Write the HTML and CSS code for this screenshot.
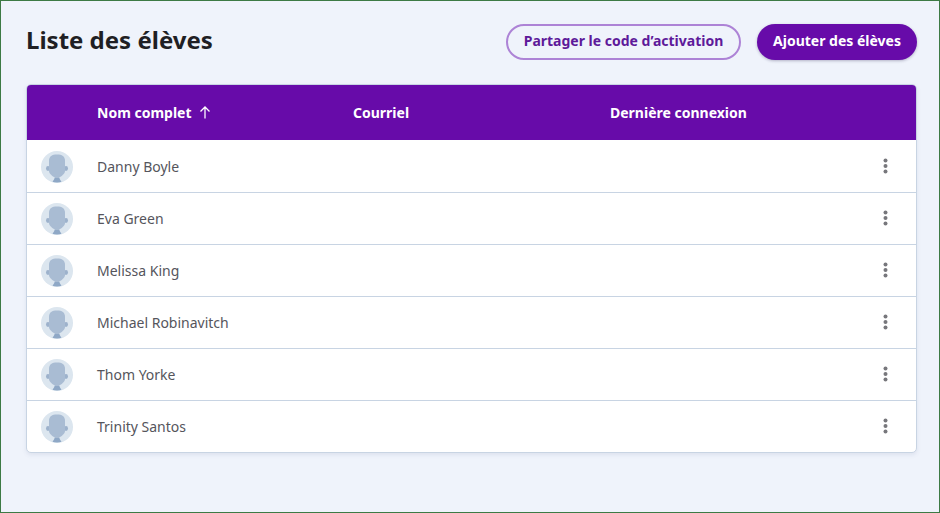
FILE: index.html
```html
<!DOCTYPE html>
<html lang="fr">
<head>
<meta charset="utf-8">
<title>Liste des élèves</title>
<link rel="stylesheet" href="styles.css">
</head>
<body>
<svg class="defs" width="0" height="0" aria-hidden="true">
  <symbol id="avatar" viewBox="0 0 32 32">
    <circle cx="16" cy="16" r="16" fill="#dce6ef"/>
    <ellipse cx="7" cy="17.500" rx="2" ry="2.400" fill="#9db2cc"/>
    <ellipse cx="25" cy="17.500" rx="2" ry="2.400" fill="#9db2cc"/>
    <path d="M8 10C8 5 11 3.500 16 3.500S24 5 24 10v10c0 2.500-3.500 5.500-6 6.500h-4c-2.500-1-6-4-6-6.500z" fill="#a9bcd3"/>
    <path d="M13.800 26.500h4.400l.8 2 1.500 2.300c-2.500.9-6.500.9-9 0l1.500-2.300z" fill="#8fa8c6"/>
  </symbol>
  <symbol id="dots" viewBox="0 0 5 16">
    <circle cx="2.500" cy="2.500" r="2"/>
    <circle cx="2.500" cy="8" r="2"/>
    <circle cx="2.500" cy="13.500" r="2"/>
  </symbol>
</svg>
<main class="page">
  <header class="top">
    <h1 class="title">Liste des élèves</h1>
    <div class="actions">
      <button class="btn btn-outline">Partager le code d’activation</button>
      <button class="btn btn-solid">Ajouter des élèves</button>
    </div>
  </header>
  <section class="card">
    <div class="row head">
      <div class="c-avatar"></div>
      <div class="c-name">Nom complet
        <svg class="arrow" width="12" height="13" viewBox="0 0 12 13"><path d="M6 12.500V1M1.500 5.500L6 1l4.500 4.500" fill="none" stroke="#fff" stroke-width="1.300"/></svg>
      </div>
      <div class="c-mail">Courriel</div>
      <div class="c-last">Dernière connexion</div>
    </div>
    <div class="row item">
      <div class="c-avatar"><svg class="avatar"><use href="#avatar"/></svg></div>
      <div class="c-name">Danny Boyle</div><div class="c-mail"></div><div class="c-last"></div>
      <svg class="dots"><use href="#dots"/></svg>
    </div>
    <div class="row item">
      <div class="c-avatar"><svg class="avatar"><use href="#avatar"/></svg></div>
      <div class="c-name">Eva Green</div><div class="c-mail"></div><div class="c-last"></div>
      <svg class="dots"><use href="#dots"/></svg>
    </div>
    <div class="row item">
      <div class="c-avatar"><svg class="avatar"><use href="#avatar"/></svg></div>
      <div class="c-name">Melissa King</div><div class="c-mail"></div><div class="c-last"></div>
      <svg class="dots"><use href="#dots"/></svg>
    </div>
    <div class="row item">
      <div class="c-avatar"><svg class="avatar"><use href="#avatar"/></svg></div>
      <div class="c-name">Michael Robinavitch</div><div class="c-mail"></div><div class="c-last"></div>
      <svg class="dots"><use href="#dots"/></svg>
    </div>
    <div class="row item">
      <div class="c-avatar"><svg class="avatar"><use href="#avatar"/></svg></div>
      <div class="c-name">Thom Yorke</div><div class="c-mail"></div><div class="c-last"></div>
      <svg class="dots"><use href="#dots"/></svg>
    </div>
    <div class="row item">
      <div class="c-avatar"><svg class="avatar"><use href="#avatar"/></svg></div>
      <div class="c-name">Trinity Santos</div><div class="c-mail"></div><div class="c-last"></div>
      <svg class="dots"><use href="#dots"/></svg>
    </div>
  </section>
</main>
</body>
</html>
```

FILE: styles.css
```css
* { box-sizing: border-box; }
html, body { margin: 0; height: 100%; }
body { font-family: "Noto Sans", sans-serif; overflow: hidden; }
.defs { display: block; height: 0; }
.page {
  width: 940px;
  height: 513px;
  background: #eff3fb;
  border: 1px solid #3d7a45;
  padding: 23px 22px 0 25px;
}
.top {
  display: flex;
  justify-content: space-between;
  align-items: center;
  height: 36px;
  margin-bottom: 24px;
}
.title {
  margin: 0 0 4px;
  font-size: 24px;
  line-height: 32px;
  font-weight: 700;
  color: #1f1f24;
}
.actions { display: flex; gap: 16px; }
.btn {
  font-family: inherit;
  font-size: 14px;
  font-weight: 700;
  line-height: 20px;
  height: 36px;
  border-radius: 18px;
  padding: 0 0 3px;
  cursor: pointer;
}
.btn-outline {
  width: 235px;
  background: transparent;
  border: 2px solid #ad83d6;
  color: #5e1a9a;
}
.btn-solid {
  width: 160px;
  background: #670ba9;
  border: 0;
  color: #fff;
  box-shadow: 0 1px 3px rgba(40, 30, 80, .3);
}
.card {
  width: 891px;
  background: #fff;
  border: 1px solid #c8d4e3;
  border-radius: 5px;
  box-shadow: 0 2px 4px rgba(90, 110, 150, .12);
  overflow: hidden;
}
.row { display: flex; align-items: center; }
.head {
  height: 55px;
  background: #670ba9;
  color: #fff;
  font-size: 14px;
  font-weight: 700;
}
.item {
  height: 52px;
  font-size: 14px;
  color: #55555c;
  border-top: 1px solid #c8d4e3;
  position: relative;
}
.head + .item { border-top-color: #fff; }
.c-avatar { width: 70px; padding-left: 14px; display: flex; }
.c-name { width: 256px; display: flex; align-items: center; }
.c-mail { width: 257px; }
.c-last { flex: 1; }
.avatar { width: 32px; height: 32px; display: block; }
.arrow { margin-left: 7px; }
.dots {
  width: 5px;
  height: 16px;
  fill: #77777c;
  margin: 0 28px 1px 0;
}
```
